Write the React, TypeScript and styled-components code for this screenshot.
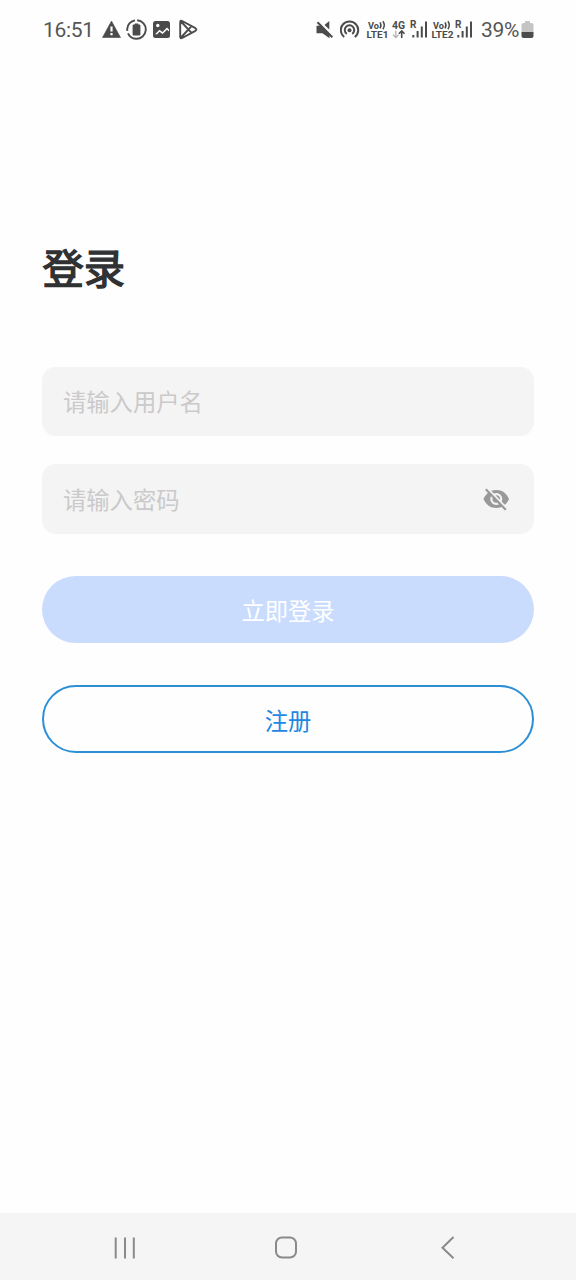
import React from 'react';
import styled, { createGlobalStyle } from 'styled-components';

const GlobalStyle = createGlobalStyle`
  * { box-sizing: border-box; }
  body { margin: 0; background: #fefefe; }
`;

const Screen = styled.div`
  display: flex;
  flex-direction: column;
  width: 576px;
  height: 1280px;
  background: #fefefe;
  font-family: Roboto, 'Noto Sans CJK SC', sans-serif;
`;

const StatusBar = styled.header`
  display: flex;
  justify-content: space-between;
  height: 60px;
  padding: 18px 42px 18px 43px;
  color: #4b4b4b;
`;

const StatusGroup = styled.div`
  display: flex;
  align-items: center;
  height: 24px;
`;

const StatusText = styled.span<{ $width: number }>`
  width: ${({ $width }) => $width}px;
  color: #555;
  font-size: 21px;
  line-height: 24px;
  white-space: nowrap;
  letter-spacing: -0.3px;
`;

const Glyph = styled.svg<{ $gap?: number }>`
  display: block;
  flex: none;
  margin-right: ${({ $gap = 0 }) => $gap}px;
  fill: currentColor;
  font-family: Roboto, sans-serif;
  font-weight: 700;
`;

const Main = styled.main`
  display: flex;
  flex: 1;
  flex-direction: column;
  padding: 180px 42px 0;
`;

const Title = styled.h1`
  height: 60px;
  margin: 0 0 67px;
  padding-left: 0.5px;
  color: #303133;
  font-size: 41.3px;
  font-weight: 400;
  line-height: 61px;
  -webkit-text-stroke: 1.3px #303133;
`;

const Field = styled.label<{ $height: number; $after: number }>`
  display: flex;
  align-items: center;
  height: ${({ $height }) => $height}px;
  margin-bottom: ${({ $after }) => $after}px;
  padding: 0 24px 0 21px;
  border-radius: 14px;
  background: #f4f4f4;
`;

const Input = styled.input`
  flex: 1;
  min-width: 0;
  height: 40px;
  padding: 0;
  border: 0;
  outline: 0;
  background: transparent;
  color: #303133;
  font: 23.3px 'Noto Sans CJK SC', sans-serif;
  &::placeholder { color: #cacaca; opacity: 1; }
`;

const UsernameInput = styled(Input)`
  margin-bottom: 1px;
`;

const Button = styled.button<{ $outlined?: boolean }>`
  display: flex;
  align-items: center;
  justify-content: center;
  height: ${({ $outlined }) => ($outlined ? 67.5 : 67)}px;
  margin: 0 0 42px;
  padding: ${({ $outlined }) => ($outlined ? 2 : 1)}px 0 0;
  border: ${({ $outlined }) => ($outlined ? '2px solid #2d8fd6' : '0')};
  border-radius: 34px;
  background: ${({ $outlined }) => ($outlined ? 'transparent' : '#cadcfe')};
  color: ${({ $outlined }) => ($outlined ? '#1f88e0' : '#fff')};
  font: 23.3px 'Noto Sans CJK SC', sans-serif;
`;

const NavBar = styled.nav`
  display: grid;
  grid-template-columns: 24px 24px 20px;
  column-gap: 137px;
  align-items: center;
  height: 67px;
  padding: 2px 0 0 113px;
  background: #f5f5f5;
  color: #8a8a8a;
`;

const WarningIcon = () => (
  <Glyph width="19" height="24" $gap={5}>
    <path d="M9.5 3 18.5 19.5H0.5Z" stroke="currentColor" strokeWidth="0.6" strokeLinejoin="round" />
    <path d="M8.4 8.5h2.2v5H8.4zM8.4 15h2.2v2.2H8.4z" fill="#fefefe" />
  </Glyph>
);

const BatteryCareIcon = () => (
  <Glyph width="21" height="24" $gap={5}>
    <circle cx="10.5" cy="11.5" r="9.3" fill="none" stroke="currentColor" strokeWidth="1.9" strokeDasharray="39 2.5 14.4 2.5" transform="rotate(-86 10.5 11.5)" />
    <path d="M8.7 5.500h3.600v1.100h1.100q1 0 1 1V16.500q0 1-1 1H7.600q-1 0-1-1V7.600q0-1 1-1h1.100z" />
  </Glyph>
);

const ImageIcon = () => (
  <Glyph width="19" height="24" $gap={7.5}>
    <rect x="1" y="3" width="17" height="17" rx="2.5" />
    <circle cx="5.8" cy="7.5" r="1.7" fill="#fefefe" />
    <path d="m3 16.3 4.500-4.500 3 2.300 4.500-4.500 2 2v1.800l-2-1.600-4.400 4.200-3.100-2.200-2.400 2.500z" fill="#fefefe" />
  </Glyph>
);

const PlayIcon = () => (
  <Glyph width="19" height="24">
    <path d="M1.2 4.2q0-2.2 2-1.2l13.2 7.2q2 1.3 0 2.6L3.2 20q-2 1-2-1.2zM2 3.500l10.500 11.300M2 19.500 12.500 8.200" fill="none" stroke="currentColor" strokeWidth="1.9" strokeLinejoin="round" />
  </Glyph>
);

const MuteIcon = () => (
  <Glyph width="18" height="24" $gap={6}>
    <path d="M0.500 7.800h5l8 8.500v4L6.500 15.300H0.500zM13.300 3v8.600L8.500 6.900z" />
    <path d="m1.500 4.200 14.800 15.100" fill="none" stroke="currentColor" strokeWidth="2" />
  </Glyph>
);

const HotspotIcon = () => (
  <Glyph width="20" height="24" $gap={6}>
    <circle cx="9.500" cy="12.2" r="2" />
    <path d="M4.200 19A8.700 8.700 0 1 1 14.800 19M6.800 15.900A4.700 4.700 0 1 1 12.200 15.900" fill="none" stroke="currentColor" strokeWidth="2" />
  </Glyph>
);

const VolteIcon = ({ line }: { line: number }) => (
  <Glyph width="23" height="24" $gap={line === 1 ? 3 : 1}>
    <text x="2" y="10.500" fontSize="9.5" textLength="11" lengthAdjust="spacingAndGlyphs">Vo</text>
    <path d="M14 4.300q2 3 0 6M16.900 3.200q2.800 4 0 8" fill="none" stroke="currentColor" strokeWidth="1.500" />
    <text x="0.500" y="20" fontSize="9.8" textLength="22" lengthAdjust="spacingAndGlyphs">LTE{line}</text>
  </Glyph>
);

const DataIcon = () => (
  <Glyph width="14" height="24" $gap={4}>
    <text x="0" y="10.8" fontSize="10.7" textLength="13" lengthAdjust="spacingAndGlyphs">4G</text>
    <path d="M3.800 12.500v7M1 16.700l2.800 2.900 2.800-2.900" fill="none" stroke="#b4b4b4" strokeWidth="1.3" />
    <path d="M9.700 20v-7M6.900 15.800l2.800-2.900 2.800 2.900" fill="none" stroke="currentColor" strokeWidth="1.6" />
  </Glyph>
);

const SignalIcon = ({ gap }: { gap: number }) => (
  <Glyph width="18" height="24" $gap={gap}>
    <text x="0" y="10" fontSize="10">R</text>
    <path d="M2.300 17h2v2.500h-2zM6.600 13h2v6.500h-2zM10.800 8.500h2v11h-2zM15 3.500h2v16h-2z" />
  </Glyph>
);

const BatteryIcon = () => (
  <Glyph width="13" height="24">
    <path d="M4 3h5v2h1.500q2 0 2 2v7H.5V7q0-2 2-2H4z" fill="#c4c4c4" />
    <path d="M.5 14h12v4q0 2-2 2h-8q-2 0-2-2z" />
  </Glyph>
);

const HiddenEyeIcon = () => (
  <Glyph width="28" height="26" viewBox="0 0 28 26" color="#999">
    <path fillRule="evenodd" d="M1.5 13C4 7.300 8.500 4 14.300 4S24.800 7.300 27 13c-2.300 5.600-7 9-12.700 9S3.800 18.700 1.500 13Zm6.800 0a6 6 0 1 0 12 0 6 6 0 1 0-12 0Z" />
    <circle cx="14.3" cy="13" r="3.8" />
    <path d="m5.500 2.500 20 20.500" stroke="#f4f4f4" strokeWidth="2" />
    <path d="m3.800 3.300 20 20.500" stroke="currentColor" strokeWidth="2.2" />
  </Glyph>
);

export default function App() {
  return (
    <Screen>
      <GlobalStyle />
      <StatusBar>
        <StatusGroup>
          <StatusText $width={59}>16:51</StatusText>
          <WarningIcon />
          <BatteryCareIcon />
          <ImageIcon />
          <PlayIcon />
        </StatusGroup>
        <StatusGroup>
          <MuteIcon />
          <HotspotIcon />
          <VolteIcon line={1} />
          <DataIcon />
          <SignalIcon gap={3} />
          <VolteIcon line={2} />
          <SignalIcon gap={8} />
          <StatusText $width={40}>39%</StatusText>
          <BatteryIcon />
        </StatusGroup>
      </StatusBar>
      <Main>
        <Title>登录</Title>
        <Field $height={69} $after={28}>
          <UsernameInput placeholder="请输入用户名" />
        </Field>
        <Field $height={70} $after={42}>
          <Input type="password" placeholder="请输入密码" />
          <HiddenEyeIcon />
        </Field>
        <Button>立即登录</Button>
        <Button $outlined>注册</Button>
      </Main>
      <NavBar>
        <Glyph width="24" height="24">
          <path d="M2.700 1.500v21M12 1.500v21M20.800 1.500v21" stroke="currentColor" strokeWidth="2" />
        </Glyph>
        <Glyph width="24" height="24">
          <rect x="2" y="1.5" width="20" height="20" rx="6" fill="none" stroke="currentColor" strokeWidth="2" />
        </Glyph>
        <Glyph width="20" height="24">
          <path d="M18.500 1 7.500 11.700l11 10.500" fill="none" stroke="currentColor" strokeWidth="2" />
        </Glyph>
      </NavBar>
    </Screen>
  );
}
